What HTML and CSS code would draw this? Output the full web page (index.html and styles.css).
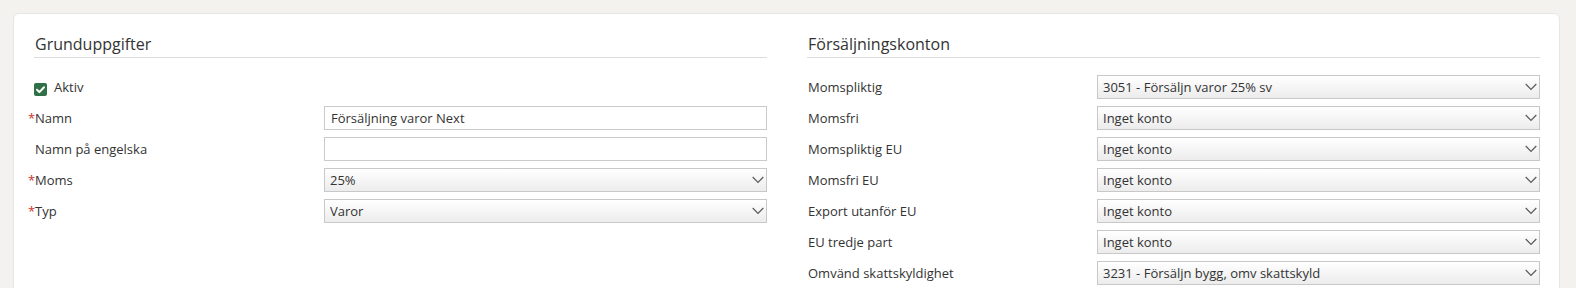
FILE: index.html
```html
<!DOCTYPE html>
<html lang="sv">
  <head>
    <meta charset="UTF-8" />
    <meta name="viewport" content="width=device-width, initial-scale=1.0" />
    <title>Artikelkonto</title>
    <link rel="stylesheet" href="styles.css">
  </head>
  <body>
    <div class="card">
      <div class="column">
        <h2 class="section_title">Grunduppgifter</h2>
        <div class="row">
          <label class="check_label"><span class="check_box"><svg width="13" height="13" viewBox="0 0 13 13"><path d="M3 6.8 L5.4 9.1 L10 4.2" fill="none" stroke="#fff" stroke-width="2" stroke-linecap="round" stroke-linejoin="round"/></svg></span>Aktiv</label>
        </div>
        <div class="row">
          <label class="label -required">Namn</label>
          <input class="field" type="text" value="Försäljning varor Next">
        </div>
        <div class="row">
          <label class="label">Namn på engelska</label>
          <input class="field" type="text" value="">
        </div>
        <div class="row">
          <label class="label -required">Moms</label>
          <div class="select_wrap">
            <select class="field select"><option>25%</option></select>
            <svg class="chevron" width="12" height="8" viewBox="0 0 12 8"><path d="M0.7 1 L6 6.5 L11.3 1" fill="none" stroke="#5a5a5a" stroke-width="1.2"/></svg>
          </div>
        </div>
        <div class="row">
          <label class="label -required">Typ</label>
          <div class="select_wrap">
            <select class="field select"><option>Varor</option></select>
            <svg class="chevron" width="12" height="8" viewBox="0 0 12 8"><path d="M0.7 1 L6 6.5 L11.3 1" fill="none" stroke="#5a5a5a" stroke-width="1.2"/></svg>
          </div>
        </div>
      </div>

      <div class="column">
        <h2 class="section_title">Försäljningskonton</h2>
        <div class="row">
          <label class="label">Momspliktig</label>
          <div class="select_wrap">
            <select class="field select"><option>3051 - Försäljn varor 25% sv</option></select>
            <svg class="chevron" width="12" height="8" viewBox="0 0 12 8"><path d="M0.7 1 L6 6.5 L11.3 1" fill="none" stroke="#5a5a5a" stroke-width="1.2"/></svg>
          </div>
        </div>
        <div class="row">
          <label class="label">Momsfri</label>
          <div class="select_wrap">
            <select class="field select"><option>Inget konto</option></select>
            <svg class="chevron" width="12" height="8" viewBox="0 0 12 8"><path d="M0.7 1 L6 6.5 L11.3 1" fill="none" stroke="#5a5a5a" stroke-width="1.2"/></svg>
          </div>
        </div>
        <div class="row">
          <label class="label">Momspliktig EU</label>
          <div class="select_wrap">
            <select class="field select"><option>Inget konto</option></select>
            <svg class="chevron" width="12" height="8" viewBox="0 0 12 8"><path d="M0.7 1 L6 6.5 L11.3 1" fill="none" stroke="#5a5a5a" stroke-width="1.2"/></svg>
          </div>
        </div>
        <div class="row">
          <label class="label">Momsfri EU</label>
          <div class="select_wrap">
            <select class="field select"><option>Inget konto</option></select>
            <svg class="chevron" width="12" height="8" viewBox="0 0 12 8"><path d="M0.7 1 L6 6.5 L11.3 1" fill="none" stroke="#5a5a5a" stroke-width="1.2"/></svg>
          </div>
        </div>
        <div class="row">
          <label class="label">Export utanför EU</label>
          <div class="select_wrap">
            <select class="field select"><option>Inget konto</option></select>
            <svg class="chevron" width="12" height="8" viewBox="0 0 12 8"><path d="M0.7 1 L6 6.5 L11.3 1" fill="none" stroke="#5a5a5a" stroke-width="1.2"/></svg>
          </div>
        </div>
        <div class="row">
          <label class="label">EU tredje part</label>
          <div class="select_wrap">
            <select class="field select"><option>Inget konto</option></select>
            <svg class="chevron" width="12" height="8" viewBox="0 0 12 8"><path d="M0.7 1 L6 6.5 L11.3 1" fill="none" stroke="#5a5a5a" stroke-width="1.2"/></svg>
          </div>
        </div>
        <div class="row">
          <label class="label">Omvänd skattskyldighet</label>
          <div class="select_wrap">
            <select class="field select"><option>3231 - Försäljn bygg, omv skattskyld</option></select>
            <svg class="chevron" width="12" height="8" viewBox="0 0 12 8"><path d="M0.7 1 L6 6.5 L11.3 1" fill="none" stroke="#5a5a5a" stroke-width="1.2"/></svg>
          </div>
        </div>
      </div>
    </div>
  </body>
</html>
```

FILE: styles.css
```css
* {
  box-sizing: border-box;
}
body {
  margin: 0;
  background: #f3f2ef;
  font-family: "Open Sans", "Liberation Sans", sans-serif;
  font-size: 13px;
  color: #333;
  height: 288px;
  overflow: hidden;
}
div.card {
  margin: 13px 0 0 13px;
  width: 1547px;
  height: 400px;
  background: #fff;
  border: 1px solid #e6e6e4;
  border-radius: 6px;
  padding: 19px 20px 0 20px;
  display: flex;
  gap: 40px;
}
div.column {
  width: 733px;
  flex-shrink: 0;
}
h2.section_title {
  margin: 0 0 17px 0;
  font-size: 16px;
  font-weight: 400;
  line-height: 22px;
  padding: 0 0 2px 1px;
  border-bottom: 1px solid #dcdcdc;
  color: #333;
}
div.row {
  display: flex;
  align-items: center;
  height: 24px;
  margin-bottom: 7px;
}
label.label {
  width: 290px;
  flex-shrink: 0;
  padding-left: 1px;
  position: relative;
  line-height: 24px;
}
label.-required::before {
  content: "*";
  color: #d0312d;
  position: absolute;
  left: -6px;
  top: 0;
}
label.check_label {
  display: flex;
  align-items: center;
  line-height: 24px;
}
span.check_box {
  width: 13px;
  height: 13px;
  margin: 4px 7px 0 0;
  background: #2f7046;
  border-radius: 2px;
  display: flex;
}
.field {
  width: 443px;
  height: 24px;
  border: 1px solid #cacaca;
  background: #fff;
  font-family: inherit;
  font-size: 13px;
  color: #333;
  padding: 0 6px;
  margin: 0;
  outline: none;
  border-radius: 0;
}
div.select_wrap {
  position: relative;
  width: 443px;
  height: 24px;
}
select.select {
  appearance: none;
  -webkit-appearance: none;
  background: linear-gradient(#ffffff, #ececec);
  border-color: #c8c8c8;
  padding: 0 24px 0 5px;
}
svg.chevron {
  position: absolute;
  right: 3px;
  top: 8px;
  pointer-events: none;
}
```
